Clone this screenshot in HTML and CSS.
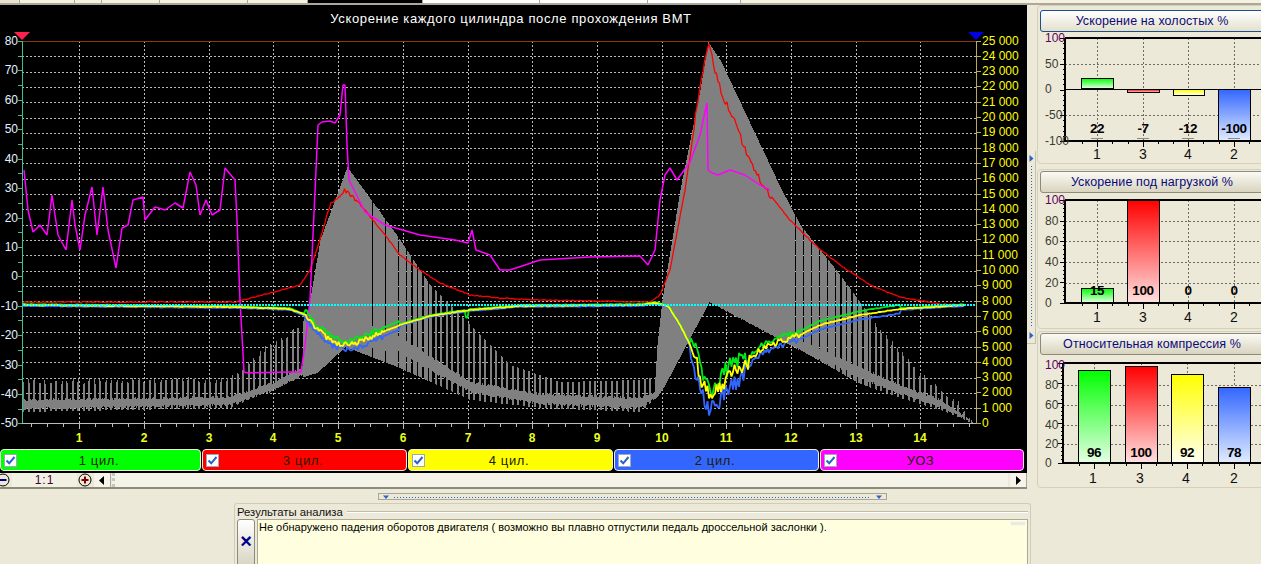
FILE: index.html
```html
<!DOCTYPE html>
<html lang="ru">
<head>
<meta charset="utf-8">
<title>Ускорение каждого цилиндра</title>
<link rel="stylesheet" href="styles.css">
</head>
<body>
<div class="page">
  <div class="tabs">
    <span class="tab tab-a"></span><span class="tab tab-b"></span><span class="tab tab-c"></span><span class="tab tab-d"></span><span class="tab tab-e"></span>
    <span class="tab tab-f"></span><span class="tab tab-g"></span><span class="tab tab-h"></span><span class="tab tab-i"></span><span class="tab tab-j"></span>
  </div>
  <div class="work">
    <div class="left">
      <div class="upper">
        <div class="chart-stack">
          <svg id="main" class="main-chart" width="1027" height="444" viewBox="0 5 1027 444" aria-label="График"></svg>
          <div class="legend">
            <label class="series s-green"><span class="check"><svg width="11" height="11" viewBox="0 0 11 11"><path class="tick" d="M1.5 5.5 L4.2 8.3 L9.5 2"/></svg></span><span class="series-name">1 цил.</span></label>
            <label class="series s-red"><span class="check"><svg width="11" height="11" viewBox="0 0 11 11"><path class="tick" d="M1.5 5.5 L4.2 8.3 L9.5 2"/></svg></span><span class="series-name">3 цил.</span></label>
            <label class="series s-yellow"><span class="check"><svg width="11" height="11" viewBox="0 0 11 11"><path class="tick" d="M1.5 5.5 L4.2 8.3 L9.5 2"/></svg></span><span class="series-name">4 цил.</span></label>
            <label class="series s-blue"><span class="check"><svg width="11" height="11" viewBox="0 0 11 11"><path class="tick" d="M1.5 5.5 L4.2 8.3 L9.5 2"/></svg></span><span class="series-name">2 цил.</span></label>
            <label class="series s-magenta"><span class="check"><svg width="11" height="11" viewBox="0 0 11 11"><path class="tick" d="M1.5 5.5 L4.2 8.3 L9.5 2"/></svg></span><span class="series-name">УОЗ</span></label>
          </div>
          <div class="scrollrow">
            <svg class="zoom-btn zoom-minus" width="14" height="14" viewBox="0 0 14 14"><circle cx="7" cy="7" r="6"/><path d="M3.5 7 H10.5"/></svg>
            <span class="ratio">1:1</span>
            <svg class="zoom-btn zoom-plus" width="14" height="14" viewBox="0 0 14 14"><circle cx="7" cy="7" r="6"/><path d="M3.5 7 H10.5 M7 3.5 V10.5"/></svg>
            <span class="arrow-btn"><svg width="6" height="9" viewBox="0 0 6 9"><path d="M5 0 V9 L0 4.5 Z"/></svg></span>
            <span class="track"></span>
            <span class="arrow-btn"><svg width="6" height="9" viewBox="0 0 6 9"><path d="M1 0 V9 L6 4.5 Z"/></svg></span>
          </div>
        </div>
        <div class="vsplit">
          <svg width="7" height="190" viewBox="0 0 7 190"><path class="tri" d="M1.500 3 L5.500 6.500 L1.500 10 Z"/><path class="dots-v" d="M3.500 14 V176"/><path class="tri" d="M1.500 180 L5.500 183.500 L1.500 187 Z"/></svg>
        </div>
      </div>
      <div class="hsplit">
        <svg width="507" height="7" viewBox="0 0 507 7"><path class="tri" d="M4 1.500 L10 1.500 L7 5 Z"/><path class="dots-h" d="M15 3.500 H492"/><path class="tri" d="M497 1.500 H503 L500 5 Z"/></svg>
      </div>
      <section class="results">
        <div class="results-head"><span class="results-title">Результаты анализа</span><span class="results-rule"></span></div>
        <div class="results-body">
          <span class="close-btn">×</span>
          <div class="message">Не обнаружено падения оборотов двигателя ( возможно вы плавно отпустили педаль дроссельной заслонки ).<span class="mini-scroll"></span></div>
        </div>
      </section>
    </div>
    <aside class="right">
      <section class="panel panel-1">
        <div class="panel-title is-active">Ускорение на холостых %</div>
        <svg id="bars1" width="224" height="131" viewBox="1037 32 224 131"></svg>
      </section>
      <section class="panel panel-2">
        <div class="panel-title">Ускорение под нагрузкой %</div>
        <svg id="bars2" width="224" height="135" viewBox="1037 192 224 135"></svg>
      </section>
      <section class="panel panel-3">
        <div class="panel-title">Относительная компрессия %</div>
        <svg id="bars3" width="224" height="133" viewBox="1037 353 224 133"></svg>
      </section>
    </aside>
  </div>
</div>
<script src="chart.js"></script>
</body>
</html>
```

FILE: styles.css
```css
* { box-sizing: border-box; }
html, body { margin: 0; padding: 0; }
body {
  width: 1261px;
  height: 564px;
  overflow: hidden;
  background: #ece9d8;
  font-family: "Liberation Sans", Arial, sans-serif;
  color: #000;
}
.page { display: flex; flex-direction: column; height: 564px; overflow: hidden; }

.tabs { display: flex; height: 5px; flex: none; border-bottom: 2px solid #aca899; background: #f5f2e2; }
.tab { display: block; height: 3px; border-right: 1px solid #aca899; background: #f5f2e2; }
.tab-a { width: 20px; background: #e8e4d0; }
.tab-b { width: 55px; }
.tab-c { width: 27px; }
.tab-d { width: 58px; }
.tab-e { width: 88px; }
.tab-f { width: 60px; }
.tab-g { width: 115px; background: #000; }
.tab-h { width: 117px; background: #fff; }
.tab-i { width: 108px; background: #fff; }
.tab-j { width: 93px; background: #fff; }

.work { display: flex; flex: 1; min-height: 0; }
.left { width: 1037px; flex: none; display: flex; flex-direction: column; }
.upper { display: flex; flex: none; }
.chart-stack { width: 1027px; flex: none; background: #000; }
.main-chart { display: block; }

.legend { display: grid; grid-template-columns: 202px 206px 206px 206px 205px; height: 24px; padding-bottom: 2px; background: #000; }
.series {
  display: flex;
  align-items: center;
  height: 22px;
  margin-right: 1px;
  padding-left: 3px;
  border: 1px solid #f0efe0;
  border-radius: 4px;
}
.s-green { background: #00ff00; }
.s-red { background: #ff0000; }
.s-yellow { background: #ffff00; }
.s-blue { background: #3366ff; }
.s-magenta { background: #ff00ff; }
.check {
  display: flex;
  align-items: center;
  justify-content: center;
  width: 13px;
  height: 13px;
  flex: none;
  background: #fff;
  border: 1px solid #a0a8b8;
}
.tick { fill: none; stroke: #2a62c8; stroke-width: 2; }
.series-name { flex: 1; padding-right: 19px; text-align: center; font-size: 13px; letter-spacing: 0.6px; color: #202000; }

.scrollrow { display: flex; align-items: center; height: 16px; background: #ece9d8; border-bottom: 2px solid #8c8a78; }
.zoom-btn { flex: none; }
.zoom-btn circle { fill: #ece9d8; stroke: #000; stroke-width: 1; }
.zoom-btn path { fill: none; stroke-width: 2; }
.zoom-minus { margin-left: -4px; }
.zoom-minus path { stroke: #000080; }
.zoom-plus path { stroke: #800000; }
.ratio {
  width: 65px;
  height: 14px;
  margin-left: 2px;
  text-align: center;
  font-size: 12px;
  line-height: 15px;
  letter-spacing: 1px;
  color: #400040;
  background: #f2f0e2;
}
.zoom-plus { margin-left: 1px; }
.arrow-btn {
  display: flex;
  align-items: center;
  justify-content: center;
  width: 17px;
  height: 14px;
  margin-left: 2px;
  flex: none;
  background: #f6f4ea;
  border-right: 1px solid #aca899;
}
.arrow-btn path { fill: #000; }
.track { flex: 1; height: 14px; margin-left: 1px; background: #f5f3e8; border-left: 3px dotted #c8c6b8; }

.vsplit {
  width: 9px;
  flex: none;
  margin-top: 146px;
  height: 193px;
  padding: 1px 0 0 1px;
  border: 1px solid #c4c1ae;
  border-left: 0;
  border-top: 0;
}
.vsplit svg { display: block; }
.tri { fill: #2a62c8; }
.dots-v { stroke: #2a62c8; stroke-width: 1; stroke-dasharray: 1 2; fill: none; }
.dots-h { stroke: #2a62c8; stroke-width: 1; stroke-dasharray: 1 2; fill: none; }

.hsplit { width: 509px; height: 7px; margin: 4px 0 0 378px; border: 1px solid #a8a694; }
.hsplit svg { display: block; }

.results {
  width: 797px;
  height: 70px;
  margin: 3px 0 0 234px;
  padding: 0 2px;
  border: 1px solid #d0ccb8;
  border-bottom: 0;
  border-radius: 3px 3px 0 0;
}
.results-head { display: flex; align-items: center; gap: 4px; height: 14px; margin-top: 1px; }
.results-title { font-size: 11.300px; line-height: 14px; color: #111; margin-left: 0; }
.results-rule { flex: 1; height: 2px; border-top: 1px solid #c0bca8; border-bottom: 1px solid #fff; }
.results-body { display: flex; height: 46px; margin-top: 0; }
.close-btn {
  display: flex;
  align-items: center;
  justify-content: center;
  width: 18px;
  flex: none;
  padding-bottom: 2px;
  font-size: 20px;
  font-weight: bold;
  color: #00008b;
  border: 1px solid #8c8a78;
  border-radius: 3px 3px 0 0;
  background: linear-gradient(#fff, #d9d6c3);
}
.message {
  position: relative;
  flex: 1;
  margin-left: 2px;
  padding: 1px 0 0 1px;
  font-size: 11px;
  line-height: 13px;
  white-space: nowrap;
  background: #ffffdf;
  border: 1px solid #aca899;
}
.mini-scroll { position: absolute; top: 1px; right: 1px; width: 16px; height: 5px; background: #ebebda; border: 1px solid #f8f8ee; }

.right { flex: none; width: 224px; }
.panel { width: 240px; border: 1px solid #d4d0bc; border-radius: 4px; }
.panel-1 { height: 159px; padding-top: 4px; }
.panel-2 { height: 160px; margin-top: 5px; padding-top: 1px; }
.panel-3 { height: 157px; margin-top: 2px; padding-top: 1px; }
.panel svg { display: block; }
.panel-title {
  width: 232px;
  height: 22px;
  margin-left: 2px;
  padding-right: 8px;
  text-align: center;
  font-size: 12.500px;
  letter-spacing: 0.1px;
  line-height: 21px;
  color: #0a0a78;
  border: 1px solid #8c8a78;
  border-radius: 3px;
  background: linear-gradient(#fbfaf4, #d8d4c0);
}
.panel-title.is-active { border-color: #1c4e8a; background: linear-gradient(#fff, #e4e0cc); }

/* chart text */
.t-title { fill: #fff; font-size: 13px; letter-spacing: 0.63px; text-anchor: middle; }
.t-left { fill: #e2f2ff; font-size: 12px; text-anchor: end; }
.t-right { fill: #ffff00; font-size: 12px; }
.t-x { fill: #e8ff20; font-size: 12px; font-weight: bold; text-anchor: middle; }
.t-bar-y { fill: #3a3a34; font-size: 12px; }
.t-bar-top { fill: #600060; font-size: 12px; }
.t-bar-val { fill: #000; font-size: 13.500px; font-weight: bold; letter-spacing: -0.4px; text-anchor: middle; }
.t-bar-x { fill: #101010; font-size: 14px; text-anchor: middle; }

.c-grid { stroke: #b8b8b8; stroke-width: 1; stroke-dasharray: 2 2; fill: none; shape-rendering: crispEdges; }
.c-gray { stroke: #808080; stroke-width: 1; fill: none; shape-rendering: crispEdges; }
.c-line { fill: none; stroke-width: 1.300; stroke-linejoin: bevel; }
.c-red { stroke: #ff0000; }
.c-mag { stroke: #ff00ff; stroke-width: 1.500; }
.c-green { stroke: #00e818; stroke-width: 1.800; }
.c-yellow { stroke: #ffff00; stroke-width: 1.800; }
.c-blue { stroke: #3366ff; stroke-width: 1.800; }
.c-cyan { stroke: #00ffff; stroke-width: 2; stroke-dasharray: 2 1; fill: none; shape-rendering: crispEdges; }
.c-top { stroke: #8b3a10; stroke-width: 1; shape-rendering: crispEdges; }
.c-axl { stroke: #40c090; stroke-width: 1; fill: none; shape-rendering: crispEdges; }
.c-axr { stroke: #b8a860; stroke-width: 1; fill: none; shape-rendering: crispEdges; }
.c-axb { stroke: #bcbcbc; stroke-width: 1; fill: none; shape-rendering: crispEdges; }
.m-red { fill: #ff2050; }
.m-blue { fill: #0000e0; }

.b-grid { stroke: #6e6c60; stroke-width: 1; stroke-dasharray: 2 2; fill: none; shape-rendering: crispEdges; }
.b-axis { stroke: #000; stroke-width: 2; fill: none; shape-rendering: crispEdges; }
.b-thin { stroke: #000; stroke-width: 1; fill: none; shape-rendering: crispEdges; }
.b-bar { stroke: #000; stroke-width: 1; shape-rendering: crispEdges; }
.b-under { stroke: #8c8a78; stroke-width: 1; shape-rendering: crispEdges; }
.b-flat-y { fill: #ffff00; }
.b-flat-b { fill: #3366ff; }
```

FILE: chart.js
```js
(function () {
var NS = 'http://www.w3.org/2000/svg';
function el(parent, name, attrs, text) {
  var n = document.createElementNS(NS, name);
  for (var k in attrs) n.setAttribute(k, attrs[k]);
  if (text !== undefined) n.textContent = text;
  parent.appendChild(n);
  return n;
}
function lerp(t, x) {
  if (x <= t[0][0]) return t[0][1];
  for (var i = 1; i < t.length; i++) {
    if (x <= t[i][0]) {
      var a = t[i - 1], b = t[i];
      return a[1] + (b[1] - a[1]) * (x - a[0]) / (b[0] - a[0]);
    }
  }
  return t[t.length - 1][1];
}
var seed = 12345;
function rnd() { seed = (seed * 1103515245 + 12345) & 0x7fffffff; return seed / 0x7fffffff; }
function noise(a) { return (rnd() - 0.5) * 2 * a; }

/* ---------- main chart ---------- */
var svg = document.getElementById('main');
el(svg, 'text', { x: 511, y: 23, 'class': 't-title' }, 'Ускорение каждого цилиндра после прохождения ВМТ');

var d = '', i, x, y;
var XS = 64.7, X0 = 79.3, YT = 41, YB = 423.5;
for (i = 0; i < 14; i++) { x = Math.round(X0 + i * XS) + 0.5; d += 'M' + x + ' ' + YT + 'V' + YB; }
for (i = 1; i < 25; i++) { y = Math.round(YT + i * 15.3) + 0.5; d += 'M22 ' + y + 'H976'; }
el(svg, 'path', { d: d, 'class': 'c-grid' });

/* grey min / max envelope of the engine speed trace */
var envTop = [[22,381],[230,380],[263,350],[300,327],[308,310],[320,240],[347,167],[400,240],[430,285],[470,325],[510,365],[560,382],[640,380],[655,377],[657,345],[662,300],[680,190],[700,90],[708,42],[720,60],[780,187],[800,225],[840,275],[880,330],[920,375],[960,405],[972,423]];
var envBot = [[22,412],[230,408],[263,393],[300,378],[317,373],[345,347],[397,367],[470,400],[540,408],[640,412],[657,397],[665,385],[709,302],[800,350],[860,384],[900,398],[940,410],[972,423]];
var bandT = [[22,400],[230,397],[273,382],[300,368],[347,320],[397,335],[470,382],[540,394],[640,398],[657,390],[709,300],[800,340],[860,368],[900,385],[940,400],[972,422]];
var bandB = [[22,409],[230,405],[273,390],[300,376],[345,347],[397,352],[470,392],[540,404],[640,408],[657,397],[709,302],[800,350],[860,378],[900,394],[940,407],[972,423]];
function solid(x) {
  if (x >= 305 && x < 372) return true;
  if (x >= 372 && x < 402) return Math.floor(x) % 13 !== 8;
  if (x >= 402 && x < 432) return ((x - 22) % 5.5) < 3.6;
  if (x >= 657 && x < 792) return true;
  if (x >= 792 && x < 835) return Math.floor(x) % 8 !== 3;
  if (x >= 835 && x < 868) return ((x - 22) % 5.5) < 3.6;
  return ((x - 22) % 5.5) < 1.6;
}
d = '';
for (x = 22; x <= 972; x++) {
  var px = x + 0.5;
  d += 'M' + px + ' ' + Math.round(lerp(bandT, x) + noise(1.2)) + 'V' + Math.round(lerp(bandB, x) + noise(1.2));
  if (solid(x)) {
    d += 'M' + px + ' ' + Math.round(lerp(envTop, x) + (x < 300 || x > 870 ? noise(3) : 0)) + 'V' + Math.round(lerp(envBot, x));
  }
}
el(svg, 'path', { d: d, 'class': 'c-gray' });

/* red: engine speed */
var redT = [[22,302],[235,302],[270,293],[300,285],[310,270],[320,240],[330,205],[345,190],[350,195],[365,210],[385,235],[400,255],[420,270],[440,283],[470,295],[500,298],[540,300],[600,301],[650,302],[660,295],[670,270],[685,190],[695,120],[705,60],[709,45],[715,70],[722,95],[735,120],[745,150],[760,180],[770,195],[790,220],[815,245],[840,265],[870,285],[900,297],[940,304],[965,305]];
var pts = [];
for (x = 22; x <= 965; x += 1.5) {
  var a = (x > 688 && x < 772) ? 3.5 : (x > 325 && x < 360) ? 2 : 0.5;
  pts.push(x.toFixed(1) + ',' + (lerp(redT, x) + noise(a)).toFixed(1));
}
el(svg, 'polyline', { points: pts.join(' '), 'class': 'c-line c-red' });

/* magenta: ignition timing */
var mag = '24,170 28,210 33,232 40,225 47,235 52,195 58,235 66,250 72,200 75,225 80,250 85,215 92,187 97,235 103,187 108,230 116,268 122,228 128,225 133,200 143,197 145,220 155,207 165,210 175,203 183,208 190,172 196,185 200,215 206,200 212,215 220,210 225,168 235,180 237,220 240,300 244,372 248,373 290,372 301,372 305,345 310,300 316,170 318,125 322,122 330,121 335,123 340,115 343,85 345,85 347,145 349,180 365,212 385,225 420,235 455,240 468,243 472,230 476,250 490,255 500,270 510,270 540,260 590,257 640,256 648,265 655,250 660,200 665,175 670,168 677,180 690,162 700,135 707,103 708,170 712,173 718,175 730,170 745,175 760,185 770,190';
el(svg, 'polyline', { points: mag, 'class': 'c-line c-mag' });

/* cylinders */
var dip = [[22,305],[235,307],[290,309],[305,315],[318,330],[330,340],[345,345],[360,342],[375,335],[400,325],[430,316],[470,310],[520,306],[640,305],[655,303],[668,306],[680,325],[690,345],[697,365],[705,390],[711,400],[718,390],[730,375],[745,365],[760,350],[775,343],[800,335],[820,325],[860,315],[900,309],[965,305]];
function amp(x) {
  if (x > 305 && x < 385) return 3;
  if (x > 695 && x < 750) return 9;
  if (x >= 750 && x < 800) return 3;
  return 0.4;
}
function spread(x) {
  if (x > 305 && x < 400) return 5;
  if (x > 690 && x < 745) return 12;
  if (x >= 745 && x < 900) return 5;
  return 1;
}
function cyl(off, cls, extra) {
  var p = [];
  for (var x = 22; x <= 965; x += 1.5) {
    var v = lerp(dip, x) + off * spread(x) + noise(amp(x));
    if (extra && x > 465 && x < 468) v += 8;
    p.push(x.toFixed(1) + ',' + v.toFixed(1));
  }
  el(svg, 'polyline', { points: p.join(' '), 'class': 'c-line ' + cls });
}
cyl(0.9, 'c-blue');
cyl(-0.8, 'c-green', true);
cyl(0, 'c-yellow');
el(svg, 'path', { d: 'M22 304.500H976', 'class': 'c-cyan' });

/* axes */
el(svg, 'path', { d: 'M22 41.500H976', 'class': 'c-top' });
d = 'M22.500 41V424';
for (i = 0; i <= 26; i++) { y = Math.round(41 + i * 14.71) + 0.5; d += 'M18 ' + y + 'H22'; }
el(svg, 'path', { d: d, 'class': 'c-axl' });
d = 'M976.500 41V424';
for (i = 0; i <= 25; i++) { y = Math.round(40.5 + i * 15.3) + 0.5; d += 'M976 ' + y + 'H981'; }
el(svg, 'path', { d: d, 'class': 'c-axr' });
d = 'M22 423.500H976';
for (x = X0 - XS; x < 976; x += XS / 4) { if (x > 22) d += 'M' + (Math.round(x) + 0.5) + ' 424V427'; }
for (i = 0; i < 14; i++) d += 'M' + (Math.round(X0 + i * XS) + 0.5) + ' 424V429';
el(svg, 'path', { d: d, 'class': 'c-axb' });

for (i = 0; i <= 13; i++) {
  var v = 80 - i * 10;
  el(svg, 'text', { x: 18, y: Math.round(45 + i * 29.42), 'class': 't-left' }, String(v));
}
for (i = 0; i <= 25; i++) {
  var val = 25 - i;
  var s = val === 0 ? '0' : val + ' 000';
  el(svg, 'text', { x: 982, y: Math.round(44.5 + i * 15.3), 'class': 't-right' }, s);
}
for (i = 0; i < 14; i++) {
  el(svg, 'text', { x: Math.round(X0 + i * XS), y: 442, 'class': 't-x' }, String(i + 1));
}
el(svg, 'path', { d: 'M14 32H30L22 40Z', 'class': 'm-red' });
el(svg, 'path', { d: 'M968 32H984L976 40Z', 'class': 'm-blue' });

/* ---------- bar panels ---------- */
var COL = { g: ['#00ff00', '#e4ffe4'], r: ['#ff0000', '#ffe0e0'], y: ['#ffff00', '#fffff0'], b: ['#3366ff', '#e0ecff'] };
function bars(id, c) {
  var s = document.getElementById(id);
  var defs = el(s, 'defs', {});
  Object.keys(COL).forEach(function (k) {
    var g = el(defs, 'linearGradient', { id: id + k, x1: 0, y1: 0, x2: 0, y2: 1 });
    el(g, 'stop', { offset: 0, 'stop-color': COL[k][0] });
    el(g, 'stop', { offset: 1, 'stop-color': COL[k][1] });
  });
  var d = '';
  c.gridV.forEach(function (x) { d += 'M' + (x + 0.5) + ' ' + c.top + 'V' + c.bot; });
  c.labels.forEach(function (l, i) { if (i > 0 && i < c.labels.length - 1) d += 'M' + c.x0 + ' ' + (l[1] + 0.5) + 'H1261'; });
  el(s, 'path', { d: d, 'class': 'b-grid' });
  c.bars.forEach(function (b) {
    if (b.flat) { el(s, 'rect', { x: b.x1, y: b.y1, width: b.x2 - b.x1, height: 1, 'class': b.flat }); return; }
    el(s, 'rect', { x: b.x1 + 0.5, y: b.y1 + 0.5, width: b.x2 - b.x1, height: b.y2 - b.y1, fill: 'url(#' + id + b.k + ')', 'class': 'b-bar' });
  });
  if (c.zero) el(s, 'path', { d: 'M' + c.x0 + ' ' + (c.zero + 0.5) + 'H1261', 'class': 'b-thin' });
  el(s, 'path', { d: 'M' + c.x0 + ' ' + c.top + 'H1261M' + c.x0 + ' ' + c.top + 'V' + (c.bot + 1) + 'M' + (c.x0 - 1) + ' ' + c.bot + 'H1261', 'class': 'b-axis' });
  /* ticks */
  var t = '', n = c.labels.length - 1, step = (c.bot - c.top) / n, j;
  for (j = 0; j <= n * 5; j++) {
    var ty = Math.round(c.top + j * step / 5) + 0.5;
    t += 'M' + (c.x0 - (j % 5 === 0 ? 5 : 2)) + ' ' + ty + 'H' + c.x0;
  }
  c.gridV.forEach(function (x, i) {
    t += 'M' + (x + 0.5) + ' ' + c.bot + 'V' + (c.bot + 6);
    [-15, 15].forEach(function (o) { t += 'M' + (x + o + 0.5) + ' ' + c.bot + 'V' + (c.bot + 3); });
  });
  el(s, 'path', { d: t, 'class': 'b-thin' });
  c.labels.forEach(function (l, i) {
    el(s, 'text', { x: 1044, y: l[1] + 4, 'class': i === 0 ? 't-bar-top' : 't-bar-y' }, l[0]);
  });
  c.values.forEach(function (v, i) {
    el(s, 'text', { x: c.gridV[i], y: c.valY, 'class': 't-bar-val' }, v);
    if (c.under) el(s, 'path', { d: 'M' + (c.gridV[i] - 6) + ' ' + c.under + '.5H' + (c.gridV[i] + 6), 'class': 'b-under' });
    el(s, 'text', { x: c.xl[i], y: c.xlY, 'class': 't-bar-x' }, c.names[i]);
  });
}
var names = ['1', '3', '4', '2'];
bars('bars1', {
  x0: 1064, top: 38, bot: 141, zero: 89, under: 138,
  gridV: [1096, 1142, 1187, 1233], xl: [1096, 1142, 1187, 1233], names: names,
  labels: [['100', 38], ['50', 64], ['0', 89], ['-50', 115], ['-100', 141]],
  values: ['22', '-7', '-12', '-100'], valY: 133, xlY: 159,
  bars: [
    { x1: 1080, x2: 1112, y1: 78, y2: 88, k: 'g' },
    { x1: 1126, x2: 1158, y1: 89, y2: 92, k: 'r' },
    { x1: 1172, x2: 1203, y1: 89, y2: 95, k: 'y' },
    { x1: 1217, x2: 1249, y1: 89, y2: 140, k: 'b' }
  ]
});
bars('bars2', {
  x0: 1064, top: 199, bot: 302,
  gridV: [1096, 1142, 1187, 1233], xl: [1096, 1142, 1187, 1233], names: names,
  labels: [['100', 199], ['80', 220], ['60', 240], ['40', 261], ['20', 282], ['0', 302]],
  values: ['15', '100', '0', '0'], valY: 294, xlY: 321,
  bars: [
    { x1: 1080, x2: 1112, y1: 287, y2: 301, k: 'g' },
    { x1: 1126, x2: 1158, y1: 199, y2: 301, k: 'r' },
    { x1: 1172, x2: 1203, y1: 301, flat: 'b-flat-y' },
    { x1: 1218, x2: 1249, y1: 301, flat: 'b-flat-b' }
  ]
});
bars('bars3', {
  x0: 1062, top: 361, bot: 461,
  gridV: [1093, 1140, 1186, 1233], xl: [1092, 1139, 1185, 1233], names: names,
  labels: [['100', 363], ['80', 383], ['60', 403], ['40', 423], ['20', 442], ['0', 461]],
  values: ['96', '100', '92', '78'], valY: 455, xlY: 481,
  bars: [
    { x1: 1077, x2: 1109, y1: 368, y2: 460, k: 'g' },
    { x1: 1124, x2: 1156, y1: 364, y2: 460, k: 'r' },
    { x1: 1170, x2: 1202, y1: 372, y2: 460, k: 'y' },
    { x1: 1217, x2: 1249, y1: 385, y2: 460, k: 'b' }
  ]
});
})();
```
